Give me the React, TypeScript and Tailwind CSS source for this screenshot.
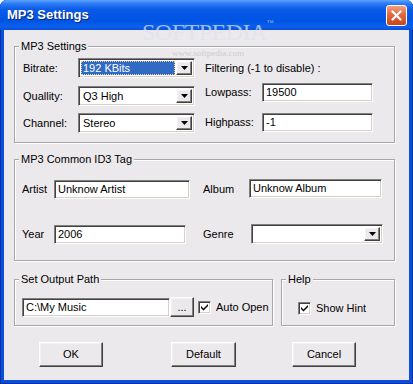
import type { ReactNode } from 'react';

const sunken =
  'border border-t-[#808080] border-l-[#808080] border-b-white border-r-white shadow-[inset_1px_1px_0_#404040,inset_-1px_-1px_0_#d4d0c8]';
const raised =
  'border border-t-white border-l-white border-b-[#404040] border-r-[#404040] shadow-[inset_-1px_-1px_0_#808080,inset_1px_1px_0_#f4f2f6]';

function Group({ title, className, children }: { title: string; className: string; children?: ReactNode }) {
  return (
    <div className={`relative border border-[#a7a6aa] shadow-[inset_1px_1px_0_#fff,1px_1px_0_#fff] ${className}`}>
      <span className="absolute -top-[8px] left-[4px] bg-[#ece9ec] px-[2px] leading-[14px]">{title}</span>
      {children}
    </div>
  );
}

function TextBox({ value, className }: { value: string; className: string }) {
  return (
    <div className={`flex items-center bg-white pl-[3px] ${sunken} ${className}`}>
      <span className="leading-none">{value}</span>
    </div>
  );
}

function Arrow() {
  return (
    <div className={`flex h-full w-[16px] items-center justify-center bg-[#ece9ec] ${raised}`}>
      <svg width="7" height="4" viewBox="0 0 7 4">
        <path d="M0 0h7L3.5 4z" fill="#000" />
      </svg>
    </div>
  );
}

function Combo({ value, selected, className }: { value: string; selected?: boolean; className: string }) {
  return (
    <div className={`flex items-stretch bg-white p-[2px] ${sunken} ${className}`}>
      <div className="flex flex-1 items-center pr-[1px]">
        {selected ? (
          <span className="flex h-full flex-1 items-center border border-dotted border-[#e6d27a] bg-[#316ac5] pl-[1px] text-white">
            {value}
          </span>
        ) : (
          <span className="pl-[2px]">{value}</span>
        )}
      </div>
      <Arrow />
    </div>
  );
}

function Check({ label }: { label: string }) {
  return (
    <div className="flex items-center">
      <div className={`flex h-[13px] w-[13px] items-center justify-center bg-white ${sunken}`}>
        <svg width="7" height="7" viewBox="0 0 7 7">
          <path d="M0 2l2.5 2.5L7 0v2L2.5 6.5 0 4z" fill="#000" />
        </svg>
      </div>
      <span className="ml-[5px]">{label}</span>
    </div>
  );
}

function Button({ label, className }: { label: string; className: string }) {
  return (
    <div className={`flex h-[25px] items-center justify-center bg-[#ece9ec] ${raised} ${className}`}>{label}</div>
  );
}

export default function App() {
  return (
    <div className="relative h-[384px] w-[413px] overflow-hidden bg-white font-['Liberation_Sans',Arial,sans-serif] text-[11px] text-black">
      <div className="flex h-full flex-col rounded-t-[7px] bg-[#0b4fd8] shadow-[inset_1px_0_0_#0831a8,inset_-1px_0_0_#0831a8,inset_0_-1px_0_#0831a8]">
        {/* title bar */}
        <div className="flex h-[30px] items-center rounded-t-[7px] bg-[linear-gradient(to_bottom,#5fa5ff_0%,#2d7bf5_12%,#0a5ae8_32%,#0054e3_70%,#0a60ec_88%,#0a4fd8_100%)] pl-[7px] pr-[6px]">
          <span className="text-[13px] font-bold text-white [text-shadow:1px_1px_0_#0a2478]">MP3 Settings</span>
          <div className="ml-auto flex h-[21px] w-[21px] items-center justify-center rounded-[3px] border border-white bg-[linear-gradient(to_bottom,#f0a080,#e06a3e_45%,#c84518)]">
            <svg width="11" height="11" viewBox="0 0 11 11">
              <path d="M1.5 1.5l8 8M9.5 1.5l-8 8" stroke="#fff" strokeWidth="2.2" strokeLinecap="round" />
            </svg>
          </div>
        </div>

        {/* body */}
        <div className="mx-[4px] mb-[4px] flex-1 bg-[#ece9ec] pl-[10px]">
          <Group title="MP3 Settings" className="mt-[16px] h-[97px] w-[381px]">
            <div className="flex pl-[8px] pt-[11px]">
              <div className="flex flex-col">
                <div className="flex h-[20px] items-center">
                  <span className="w-[55px]">Bitrate:</span>
                  <Combo value="192 KBits" selected className="h-[20px] w-[117px]" />
                </div>
                <div className="mt-[8px] flex h-[20px] items-center">
                  <span className="w-[55px]">Quallity:</span>
                  <Combo value="Q3 High" className="h-[20px] w-[117px]" />
                </div>
                <div className="mt-[7px] flex h-[20px] items-center">
                  <span className="w-[55px]">Channel:</span>
                  <Combo value="Stereo" className="h-[20px] w-[117px]" />
                </div>
              </div>
              <div className="ml-[10px] flex flex-col">
                <div className="flex h-[20px] items-center">Filtering (-1 to disable) :</div>
                <div className="mt-[5px] flex h-[19px] items-center">
                  <span className="w-[57px]">Lowpass:</span>
                  <TextBox value="19500" className="h-[19px] w-[111px]" />
                </div>
                <div className="mt-[11px] flex h-[19px] items-center">
                  <span className="w-[57px]">Highpass:</span>
                  <TextBox value="-1" className="h-[19px] w-[111px]" />
                </div>
              </div>
            </div>
          </Group>

          <Group title="MP3 Common ID3 Tag" className="mt-[16px] h-[102px] w-[381px]">
            <div className="pl-[7px] pt-[19px]">
              <div className="flex h-[20px] items-center">
                <span className="w-[32px]">Artist</span>
                <TextBox value="Unknow Artist" className="h-[19px] w-[136px]" />
                <span className="ml-[13px] w-[46px]">Album</span>
                <TextBox value="Unknow Album" className="-mt-[2px] h-[19px] w-[133px]" />
              </div>
              <div className="mt-[25px] flex h-[20px] items-center">
                <span className="w-[32px]">Year</span>
                <TextBox value="2006" className="h-[19px] w-[132px]" />
                <span className="ml-[17px] w-[48px]">Genre</span>
                <Combo value="" className="h-[20px] w-[132px]" />
              </div>
            </div>
          </Group>

          <div className="mt-[18px] flex">
            <Group title="Set Output Path" className="h-[47px] w-[259px]">
              <div className="flex items-center pl-[7px] pt-[17px]">
                <TextBox value="C:\My Music" className="h-[19px] w-[148px]" />
                <div className={`flex h-[20px] w-[24px] items-center justify-center bg-[#ece9ec] ${raised}`}>...</div>
                <div className="ml-[4px]">
                  <Check label="Auto Open" />
                </div>
              </div>
            </Group>
            <Group title="Help" className="ml-[8px] h-[47px] w-[114px]">
              <div className="pl-[16px] pt-[20px]">
                <Check label="Show Hint" />
              </div>
            </Group>
          </div>

          <div className="mt-[16px] flex">
            <Button label="OK" className="ml-[25px] w-[64px]" />
            <Button label="Default" className="ml-[68px] w-[65px]" />
            <Button label="Cancel" className="ml-[56px] w-[64px]" />
          </div>
        </div>
      </div>

      {/* watermark */}
      <div className="pointer-events-none absolute left-[142px] top-[20px] font-['Liberation_Serif',serif] text-[24px] leading-none tracking-[-0.5px] text-[#dfe3ec] opacity-70">
        SOFTPEDIA<span className="align-top text-[7px]">™</span>
      </div>
      <div className="pointer-events-none absolute left-[172px] top-[49px] font-['Liberation_Serif',serif] text-[9px] leading-none text-[#c8c6cc] opacity-80">
        www.softpedia.com
      </div>
    </div>
  );
}
